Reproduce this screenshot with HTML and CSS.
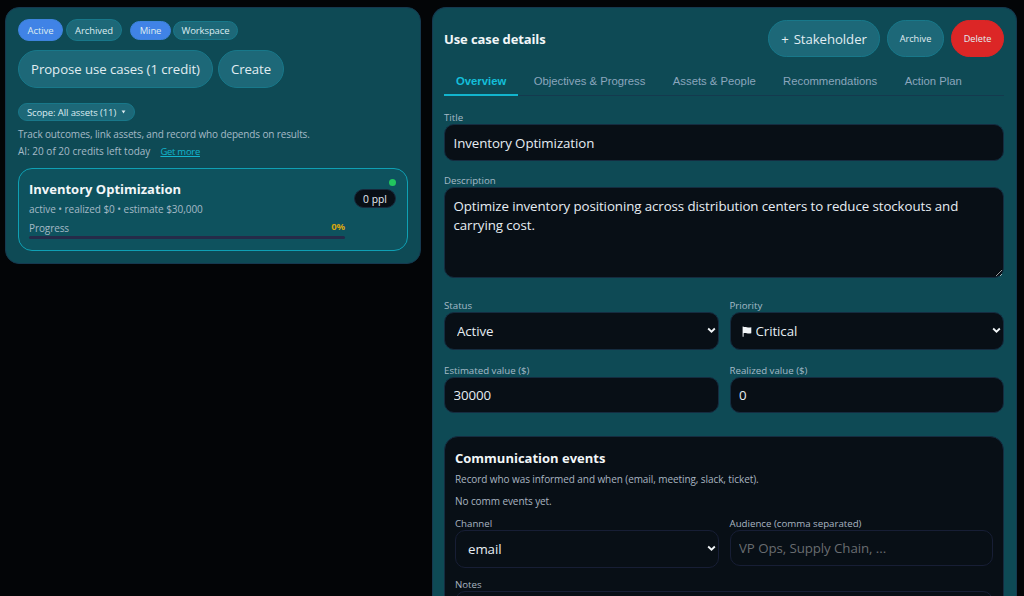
FILE: index.html
```html
<!DOCTYPE html>
<html lang="en">
<head>
<meta charset="utf-8">
<title>Use cases</title>
<link rel="stylesheet" href="styles.css">
</head>
<body>
<main class="layout">
  <section class="panel list-panel">
    <div class="chips">
      <button class="chip chip-status is-on w-active">Active</button>
      <button class="chip chip-status w-archived">Archived</button>
      <button class="chip chip-owner is-on w-mine">Mine</button>
      <button class="chip chip-owner w-workspace">Workspace</button>
    </div>
    <div class="actions">
      <button class="btn w-propose">Propose use cases (1 credit)</button>
      <button class="btn w-create">Create</button>
    </div>
    <button class="chip scope"><span>Scope: All assets (11)</span><svg class="caret" viewBox="0 0 6 5"><path d="M.6.6h4.800L3 4.400z" fill="currentColor"/></svg></button>
    <p class="hint t-track">Track outcomes, link assets, and record who depends on results.</p>
    <p class="hint credits"><span>AI: 20 of 20 credits left today</span><a class="more">Get more</a></p>
    <article class="case">
      <div class="case-main">
        <h3 class="case-title">Inventory Optimization</h3>
        <p class="case-meta">active • realized $0 • estimate $30,000</p>
        <div class="progress-head"><span>Progress</span><b class="pct">0%</b></div>
        <div class="bar"></div>
      </div>
      <div class="case-side"><i class="dot"></i><span class="ppl">0 ppl</span></div>
    </article>
  </section>

  <section class="panel detail-panel">
    <header class="detail-head">
      <h2 class="heading">Use case details</h2>
      <button class="btn w-stake"><span class="plus">+</span>Stakeholder</button>
      <button class="btn btn-small w-archive">Archive</button>
      <button class="btn btn-small danger w-delete">Delete</button>
    </header>
    <nav class="tabs">
      <a class="tab is-current">Overview</a>
      <a class="tab">Objectives &amp; Progress</a>
      <a class="tab">Assets &amp; People</a>
      <a class="tab">Recommendations</a>
      <a class="tab">Action Plan</a>
    </nav>
    <label class="field f-title"><span class="label">Title</span><input class="control" value="Inventory Optimization"></label>
    <label class="field f-desc"><span class="label">Description</span><textarea class="control area">Optimize inventory positioning across distribution centers to reduce stockouts and carrying cost.</textarea></label>
    <div class="pair">
      <label class="field"><span class="label">Status</span><span class="pick"><select class="control"><option>Active</option></select><svg class="chev" viewBox="0 0 10 7"><path d="M1.3 1.3 5 4.9 8.7 1.3" /></svg></span></label>
      <label class="field"><span class="label">Priority</span><span class="pick pick-flag"><select class="control"><option>Critical</option></select><svg class="flag" viewBox="0 0 10 11"><path d="M.6.6h1v.5C4 .4 5.5 2.100 9.300 1.300v6C5.500 8.200 4 6.500 1.600 7.200v3.500h-1z"/></svg><svg class="chev" viewBox="0 0 10 7"><path d="M1.3 1.3 5 4.9 8.7 1.3" /></svg></span></label>
    </div>
    <div class="pair pair-values">
      <label class="field"><span class="label">Estimated value ($)</span><input class="control" value="30000"></label>
      <label class="field"><span class="label">Realized value ($)</span><input class="control" value="0"></label>
    </div>
    <section class="comm">
      <h2 class="heading">Communication events</h2>
      <p class="note">Record who was informed and when (email, meeting, slack, ticket).</p>
      <p class="note note-empty">No comm events yet.</p>
      <div class="pair pair-comm">
        <label class="field"><span class="label">Channel</span><span class="pick"><select class="control"><option>email</option></select><svg class="chev" viewBox="0 0 10 7"><path d="M1.3 1.3 5 4.9 8.7 1.3" /></svg></span></label>
        <label class="field"><span class="label">Audience (comma separated)</span><input class="control" placeholder="VP Ops, Supply Chain, ..."></label>
      </div>
      <label class="field"><span class="label">Notes</span><textarea class="control notes"></textarea></label>
    </section>
  </section>
</main>
</body>
</html>
```
FILE: styles.css
```css
* { box-sizing: border-box; }
html, body { height: 100%; }
body {
  margin: 0;
  overflow: hidden;
  background: #030507;
  color: #e6edf3;
  font-family: "Open Sans", "Noto Sans", sans-serif;
  font-size: 10px;
}
h2, h3, p { margin: 0; }
button, input, select, textarea { font: inherit; color: inherit; margin: 0; }
svg { display: block; }

.layout {
  display: grid;
  grid-template-columns: 415.500px 585.500px;
  gap: 11px;
  align-items: start;
  height: 100%;
  padding: 7px 0 0 5px;
}
.panel {
  background: #0e4a55;
  border: 1px solid #15394f;
  border-radius: 14px;
}
.list-panel { height: 256.500px; padding: 11px 11.500px 0 12px; }
.detail-panel {
  height: 100%;
  padding: 11.500px 12px 0 11.500px;
  border-bottom: 0;
  border-radius: 14px 14px 0 0;
  overflow: hidden;
}

.chips { display: flex; align-items: center; height: 22px; }
.chip {
  display: flex;
  align-items: center;
  justify-content: center;
  padding: 0;
  border: 1px solid #18788a;
  border-radius: 20px;
  background: #1d6878;
  color: #dcebf0;
  font-size: 9.500px;
  letter-spacing: -0.1px;
  white-space: nowrap;
}
.chip-status { height: 22px; }
.chip-owner { height: 19px; }
.chip.is-on { background: #4083e6; border-color: #3d83dd; }
.w-active { width: 45px; margin-right: 3px; }
.w-archived { width: 56px; margin-right: 8px; }
.w-mine { width: 41px; margin-right: 2px; }
.w-workspace { width: 65px; }

.actions { display: flex; gap: 5px; margin-top: 9px; }
.btn {
  display: flex;
  align-items: center;
  justify-content: center;
  height: 37.500px;
  padding: 0;
  border: 1px solid #18788a;
  border-radius: 19px;
  background: #1d6878;
  color: #e1edf2;
  font-size: 13.200px;
  letter-spacing: -0.06px;
  white-space: nowrap;
}
.w-propose { width: 195px; }
.w-create { width: 66px; }
.scope { gap: 5px; width: 117px; height: 18px; margin-top: 15.500px; }
.caret { width: 5px; height: 4px; }

.hint { height: 17.500px; line-height: 17.500px; color: #a5bac7; white-space: nowrap; }
.t-track { margin-top: 4.500px; letter-spacing: -0.14px; }
.credits { display: flex; gap: 10px; }
.more { color: #12b5ce; font-size: 9.500px; letter-spacing: -0.28px; text-decoration: underline; }

.case {
  display: flex;
  justify-content: space-between;
  height: 83px;
  margin-top: 7px;
  padding: 10px 11px 0 10px;
  border: 1px solid #0fa0b4;
  border-radius: 14px;
  background: #0e525e;
}
.case-main { width: 316px; color: #a5bac7; }
.case-title { height: 21px; line-height: 21px; font-size: 13px; color: #f2f6f8; }
.case-meta { height: 19px; line-height: 18px; letter-spacing: -0.05px; }
.progress-head { display: flex; justify-content: space-between; height: 17px; line-height: 18px; letter-spacing: -0.1px; }
.pct { color: #d5a50f; font-size: 9.500px; line-height: 16px; }
.bar { height: 3.500px; border-radius: 2px; background: #252b49; }
.case-side { display: flex; flex-direction: column; align-items: flex-end; }
.dot { width: 7px; height: 7px; border-radius: 50%; background: #22c55e; }
.ppl {
  width: 42px;
  height: 19px;
  margin-top: 3.500px;
  border: 1px solid #17283b;
  border-radius: 10px;
  background: #080f16;
  color: #e6edf3;
  font-size: 10.300px;
  line-height: 18px;
  text-align: center;
}

.detail-head { display: flex; align-items: center; gap: 7px; height: 38px; }
.heading { font-size: 13px; line-height: 20px; color: #f2f6f8; white-space: nowrap; }
.detail-head .heading { margin-right: auto; letter-spacing: -0.1px; }
.detail-head .btn-small { font-size: 9.200px; letter-spacing: 0; }
.danger { background: #dc2626; border-color: #dc2626; }
.plus { margin-right: 5px; }
.w-stake { width: 112px; }
.w-archive { width: 57px; }
.w-delete { width: 53px; }

.tabs {
  display: flex;
  gap: 3.400px;
  height: 29px;
  margin-top: 9.500px;
  border-bottom: 1px solid #143a4e;
  font-family: "Liberation Sans", Arial, sans-serif;
  font-size: 11.300px;
}
.tab { height: 29px; padding: 0 12px; line-height: 28px; color: #8ba6bd; white-space: nowrap; }
.tab.is-current { color: #14bfda; font-weight: 700; border-bottom: 2px solid #12b5ce; }

.field { display: block; }
.label { display: block; height: 13px; line-height: 13px; color: #a5bac7; font-size: 9.700px; white-space: nowrap; }
.control {
  display: block;
  width: 100%;
  height: 36.500px;
  padding: 1px 8.500px 0;
  border: 1px solid #152c40;
  border-radius: 10px;
  outline: 0;
  background: #080f16;
  color: #e6edf3;
  font-size: 13.300px;
  letter-spacing: -0.08px;
}
.control::placeholder { color: #686c70; opacity: 1; }
.f-title { margin-top: 15px; }
.f-desc { margin-top: 13.500px; }
.area { height: 91px; padding: 9px 8.500px; line-height: 18.500px; resize: vertical; overflow: hidden; }
.pair { display: grid; grid-template-columns: 1fr 1fr; gap: 11px; margin-top: 20.500px; }
.pick { display: block; position: relative; }
.pick .control { height: 38.500px; padding: 1px 12px 0; appearance: none; }
.pick-flag .control { padding-left: 25px; }
.chev { position: absolute; right: 3px; top: 15.500px; width: 9px; height: 7px; fill: none; stroke: #f2f6f8; stroke-width: 2; }
.flag { position: absolute; left: 12.500px; top: 14px; width: 10px; height: 11px; fill: #f2f6f8; }
.pair-values { margin-top: 13.500px; }

.comm {
  height: 240px;
  margin-top: 23px;
  padding: 10.500px 10px 0;
  border: 1px solid #152c40;
  border-radius: 14px;
  background: #080f16;
}
.note { height: 22px; line-height: 22px; color: #a9b5c1; letter-spacing: -0.08px; white-space: nowrap; }
.note-empty { height: 23px; line-height: 23px; }
.pair-comm { margin-top: 4px; margin-bottom: 10px; }
.comm .label { color: #a9b5c1; }
.comm .control { border-color: #171e35; }
.notes { height: 80px; }
```
